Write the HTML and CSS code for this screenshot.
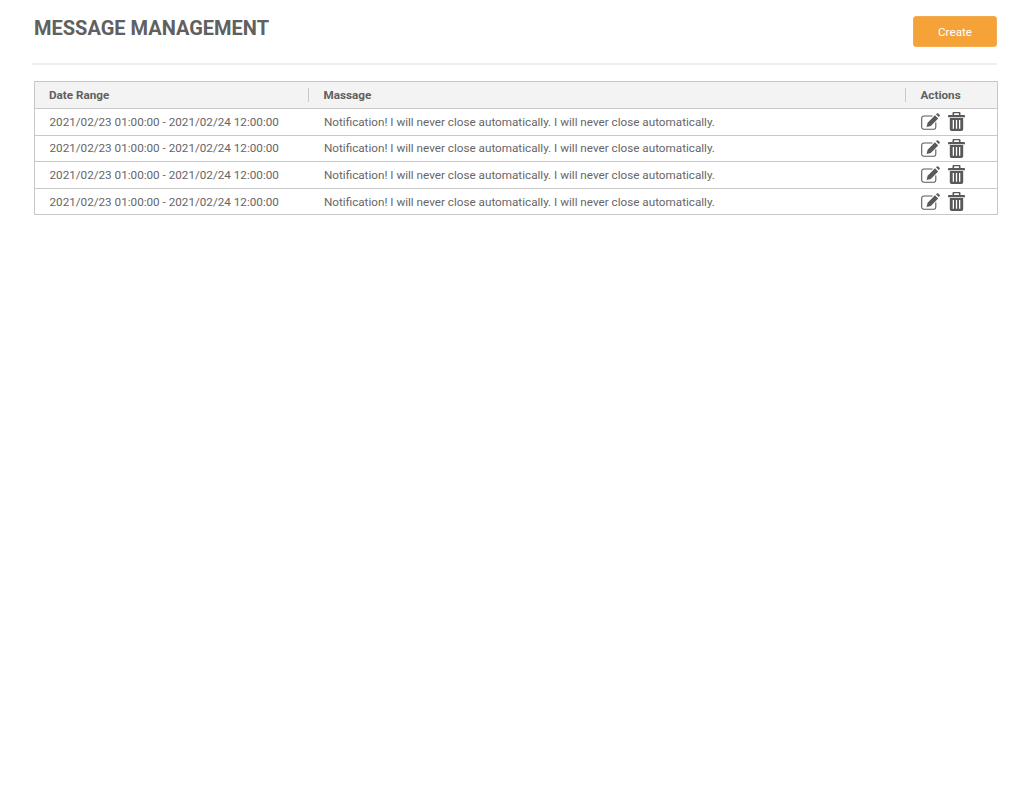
FILE: index.html
```html
<!DOCTYPE html>
<html lang="en">
<head>
<meta charset="utf-8">
<title>Message Management</title>
<link rel="stylesheet" href="styles.css">
</head>
<body>
<svg class="defs" width="0" height="0" aria-hidden="true">
  <symbol id="edit" viewBox="0 0 19 17">
    <path d="M11.500 3H3A2.200 2.200 0 0 0 .7 5.200v8.700A2.200 2.200 0 0 0 3 16.200h9.600a2.200 2.200 0 0 0 2.200-2.300V9.500" fill="none" stroke="currentColor" stroke-width="1.100"/>
    <path d="M14 2.300l3.200 3.200-7.400 7.400-4.200 1 1-4.200z" fill="currentColor"/>
    <path d="M15 1.300l.8-.8a1 1 0 0 1 1.400 0l1.300 1.300a1 1 0 0 1 0 1.400l-.8.8z" fill="currentColor"/>
  </symbol>
  <symbol id="trash" viewBox="0 0 17 19">
    <path d="M5.500 0h6a1 1 0 0 1 1 1v2h3.500a1 1 0 0 1 1 1v1.200H0V4a1 1 0 0 1 1-1h3.500V1a1 1 0 0 1 1-1zm.6 1.300V3h4.800V1.300z" fill="currentColor" fill-rule="evenodd"/>
    <path d="M1.800 6h13.400v11.200a1.800 1.800 0 0 1-1.800 1.800H3.600a1.800 1.800 0 0 1-1.800-1.800zm2.900 2v8.800h1.300V8zm3.150 0v8.800h1.300V8zm3.150 0v8.800h1.300V8z" fill="currentColor" fill-rule="evenodd"/>
  </symbol>
</svg>
<main class="page">
  <header class="head">
    <h1 class="title">MESSAGE MANAGEMENT</h1>
    <button class="create" type="button">Create</button>
  </header>
  <table class="grid">
    <thead>
      <tr>
        <th class="c-date"><span class="th-in">Date Range</span></th>
        <th class="c-msg"><span class="th-in sep">Massage</span></th>
        <th class="c-act"><span class="th-in sep">Actions</span></th>
      </tr>
    </thead>
    <tbody>
      <tr>
        <td>2021/02/23 01:00:00 - 2021/02/24 12:00:00</td>
        <td>Notification! I will never close automatically. I will never close automatically.</td>
        <td><div class="acts"><svg class="i-edit"><use href="#edit"/></svg><svg class="i-trash"><use href="#trash"/></svg></div></td>
      </tr>
      <tr>
        <td>2021/02/23 01:00:00 - 2021/02/24 12:00:00</td>
        <td>Notification! I will never close automatically. I will never close automatically.</td>
        <td><div class="acts"><svg class="i-edit"><use href="#edit"/></svg><svg class="i-trash"><use href="#trash"/></svg></div></td>
      </tr>
      <tr>
        <td>2021/02/23 01:00:00 - 2021/02/24 12:00:00</td>
        <td>Notification! I will never close automatically. I will never close automatically.</td>
        <td><div class="acts"><svg class="i-edit"><use href="#edit"/></svg><svg class="i-trash"><use href="#trash"/></svg></div></td>
      </tr>
      <tr>
        <td>2021/02/23 01:00:00 - 2021/02/24 12:00:00</td>
        <td>Notification! I will never close automatically. I will never close automatically.</td>
        <td><div class="acts"><svg class="i-edit"><use href="#edit"/></svg><svg class="i-trash"><use href="#trash"/></svg></div></td>
      </tr>
    </tbody>
  </table>
</main>
</body>
</html>
```
FILE: styles.css
```css
* { box-sizing: border-box; }
html, body { margin: 0; background: #fff; }
body {
  font-family: Roboto, "Liberation Sans", sans-serif;
  color: #666;
  height: 794px;
  overflow: hidden;
}
.defs { display: block; height: 0; }
.page { padding: 16px 27px 0 32px; }
.head {
  display: flex;
  justify-content: space-between;
  align-items: flex-start;
  height: 49px;
  border-bottom: 2px solid #eeeeee;
}
.title {
  margin: 0 0 0 2px;
  font-size: 20px;
  line-height: 24px;
  font-weight: 700;
  color: #606060;
}
.create {
  width: 84px;
  height: 31px;
  border: 1px solid #f2ab4e;
  border-radius: 3px;
  background: #f5a338;
  color: #fff;
  font: 400 11.700px Roboto, sans-serif;
  padding: 0;
}
.grid {
  margin: 16px 0 0 2px;
  width: 964px;
  border-collapse: collapse;
  table-layout: fixed;
  border: 1px solid #c8c8c8;
  font-size: 11.700px;
}
th, td { padding: 0; text-align: left; }
.c-date { width: 273px; }
.c-act { width: 93px; }
th {
  height: 27px;
  background: #f3f3f3;
  font-weight: 700;
  color: #5f5f5f;
  border-bottom: 1px solid #c8c8c8;
}
td {
  height: 26.600px;
  padding-left: 14.500px;
  border-top: 1px solid #c8c8c8;
  color: #666;
}
td + td { padding-left: 16.500px; }
.th-in { display: block; padding-left: 14px; line-height: 14px; }
.sep { border-left: 1px solid #c8c8c8; padding-left: 15px; }
.acts { display: flex; align-items: center; gap: 8px; color: #595959; }
.i-edit { width: 19px; height: 17px; }
.i-trash { width: 17px; height: 19px; }
```
